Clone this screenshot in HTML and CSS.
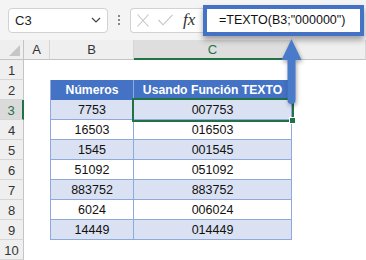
FILE: index.html
```html
<!DOCTYPE html>
<html>
<head>
  <title>Función TEXTO</title>
  <meta charset="UTF-8">
  <link rel="stylesheet" href="styles.css">
</head>
<body>
<div class="page">

  <div class="toolbar">
    <div class="namebox">
      <span>C3</span>
      <svg class="chevron" width="10" height="6" viewBox="0 0 10 6"><path d="M1 1 L5 5 L9 1" fill="none" stroke="#444" stroke-width="1.2"/></svg>
    </div>
    <div class="dots"><i></i><i></i><i></i></div>
    <div class="buttons">
      <svg class="icon" width="12" height="13" viewBox="0 0 12 13"><path d="M0.5 0.5 L11.5 12.5 M11.5 0.5 L0.5 12.5" stroke="#c4c4c4" stroke-width="1.1" fill="none"/></svg>
      <svg class="icon" width="15" height="12" viewBox="0 0 15 12"><path d="M0.5 6 L5 10.8 L14.5 0.8" stroke="#c4c4c4" stroke-width="1.1" fill="none"/></svg>
      <span class="fx">fx</span>
    </div>
    <div class="formula">=TEXTO(B3;"000000")</div>
  </div>

  <div class="sheet">
    <div class="head corner"><span class="tri"></span></div>
    <div class="head">A</div>
    <div class="head">B</div>
    <div class="head sel-col">C</div>
    <div class="head"></div>

    <div class="rowhead">1</div><div class="cell"></div><div class="cell"></div><div class="cell"></div><div class="cell"></div>

    <div class="rowhead">2</div><div class="cell"></div>
    <div class="th first">Números</div><div class="th">Usando Función TEXTO</div><div class="cell"></div>

    <div class="rowhead sel-row">3</div><div class="cell"></div>
    <div class="td first band">7753</div><div class="td band active">007753</div><div class="cell"></div>

    <div class="rowhead">4</div><div class="cell"></div>
    <div class="td first">16503</div><div class="td">016503</div><div class="cell"></div>

    <div class="rowhead">5</div><div class="cell"></div>
    <div class="td first band">1545</div><div class="td band">001545</div><div class="cell"></div>

    <div class="rowhead">6</div><div class="cell"></div>
    <div class="td first">51092</div><div class="td">051092</div><div class="cell"></div>

    <div class="rowhead">7</div><div class="cell"></div>
    <div class="td first band">883752</div><div class="td band">883752</div><div class="cell"></div>

    <div class="rowhead">8</div><div class="cell"></div>
    <div class="td first">6024</div><div class="td">006024</div><div class="cell"></div>

    <div class="rowhead">9</div><div class="cell"></div>
    <div class="td first band">14449</div><div class="td band">014449</div><div class="cell"></div>

    <div class="rowhead">10</div><div class="cell"></div><div class="cell"></div><div class="cell"></div><div class="cell"></div>
  </div>

  <!-- flecha que apunta de la celda a la fórmula -->
  <svg class="arrow" width="32" height="76" viewBox="0 0 32 76">
    <path d="M15.5 5 L25.5 26 L19.5 26 L19.5 66 A4 4 0 0 1 11.5 66 L11.5 26 L5.5 26 Z" fill="#4a7bcb"/>
  </svg>

</div>
</body>
</html>
```

FILE: styles.css
```css
body {
    margin: 0;
    background-color: #fff;
    font-family: "Liberation Sans", Arial, sans-serif;
}
.page {
    position: relative;
    width: 366px;
    height: 260px;
    overflow: hidden;
}
.toolbar {
    display: flex;
    align-items: center;
    height: 40px;
    padding-left: 8px;
    background-color: #f4f4f4;
    position: relative;
    z-index: 3;
}
.namebox {
    width: 100px;
    height: 25px;
    box-sizing: border-box;
    border: 1px solid #d2d2d2;
    border-radius: 4px;
    background-color: #fff;
    display: flex;
    align-items: center;
    justify-content: space-between;
    padding: 0 6px 0 6px;
    font-size: 13px;
    color: #222;
}
.dots {
    width: 22px;
    display: flex;
    flex-direction: column;
    align-items: center;
    gap: 2px;
}
.dots i {
    width: 2px;
    height: 2px;
    background-color: #888;
}
.buttons {
    width: 73px;
    height: 25px;
    box-sizing: border-box;
    border: 1px solid #d2d2d2;
    border-right: 0;
    border-radius: 4px 0 0 4px;
    background-color: #fff;
    display: flex;
    align-items: center;
    padding-left: 6px;
    gap: 9px;
}
.fx {
    font-family: "Liberation Serif", serif;
    font-style: italic;
    font-size: 17px;
    color: #333;
    margin-left: 1px;
}
.formula {
    width: 161px;
    height: 31px;
    box-sizing: border-box;
    border: 4px solid #4472c4;
    background-color: #fff;
    padding-left: 12px;
    display: flex;
    align-items: center;
    font-size: 12.5px;
    color: #111;
    box-shadow: 0 4px 6px rgba(0, 0, 0, 0.35);
}
.sheet {
    display: grid;
    grid-template-columns: 24px 26px 84px 158px 1fr;
    grid-template-rows: repeat(11, 20px);
    font-size: 12.5px;
}
.head {
    background-color: #efefef;
    border-right: 1px solid #d6d6d6;
    border-bottom: 1px solid #c4c4c4;
    box-sizing: border-box;
    display: flex;
    align-items: center;
    justify-content: center;
    font-size: 13px;
    color: #333;
}
.corner {
    position: relative;
    border-right-color: #c4c4c4;
}
.tri {
    position: absolute;
    right: 3px;
    bottom: 3px;
    width: 0;
    height: 0;
    border-left: 11px solid transparent;
    border-bottom: 11px solid #c6c6c6;
}
.sel-col {
    background-color: #dedede;
    color: #217346;
    border-bottom: 2px solid #217346;
}
.rowhead {
    background-color: #efefef;
    border-right: 1px solid #c4c4c4;
    border-bottom: 1px solid #d6d6d6;
    box-sizing: border-box;
    display: flex;
    align-items: center;
    justify-content: center;
    font-size: 13px;
    color: #333;
    padding-top: 2px;
}
.sel-row {
    background-color: #dadada;
    color: #217346;
    border-right: 2px solid #217346;
}
.cell {
    background-color: #fff;
}
.th {
    background-color: #4472c4;
    color: #fff;
    font-weight: bold;
    font-size: 12.2px;
    border-right: 1px solid #8ea9db;
    box-sizing: border-box;
    display: flex;
    align-items: center;
    justify-content: center;
}
.td {
    background-color: #fff;
    color: #111;
    border-right: 1px solid #8ea9db;
    border-bottom: 1px solid #8ea9db;
    box-sizing: border-box;
    display: flex;
    align-items: center;
    justify-content: center;
}
.first {
    border-left: 1px solid #8ea9db;
}
.band {
    background-color: #d9e1f2;
}
.active {
    position: relative;
    z-index: 1;
    outline: 2px solid #217346;
    outline-offset: 0px;
}
.active::after {
    content: "";
    position: absolute;
    right: -5px;
    bottom: -5px;
    width: 5px;
    height: 5px;
    background-color: #217346;
    border: 1px solid #fff;
}
.arrow {
    position: absolute;
    left: 276px;
    top: 34px;
    z-index: 4;
    filter: drop-shadow(1px 2px 2px rgba(0, 0, 0, 0.35));
}
```
